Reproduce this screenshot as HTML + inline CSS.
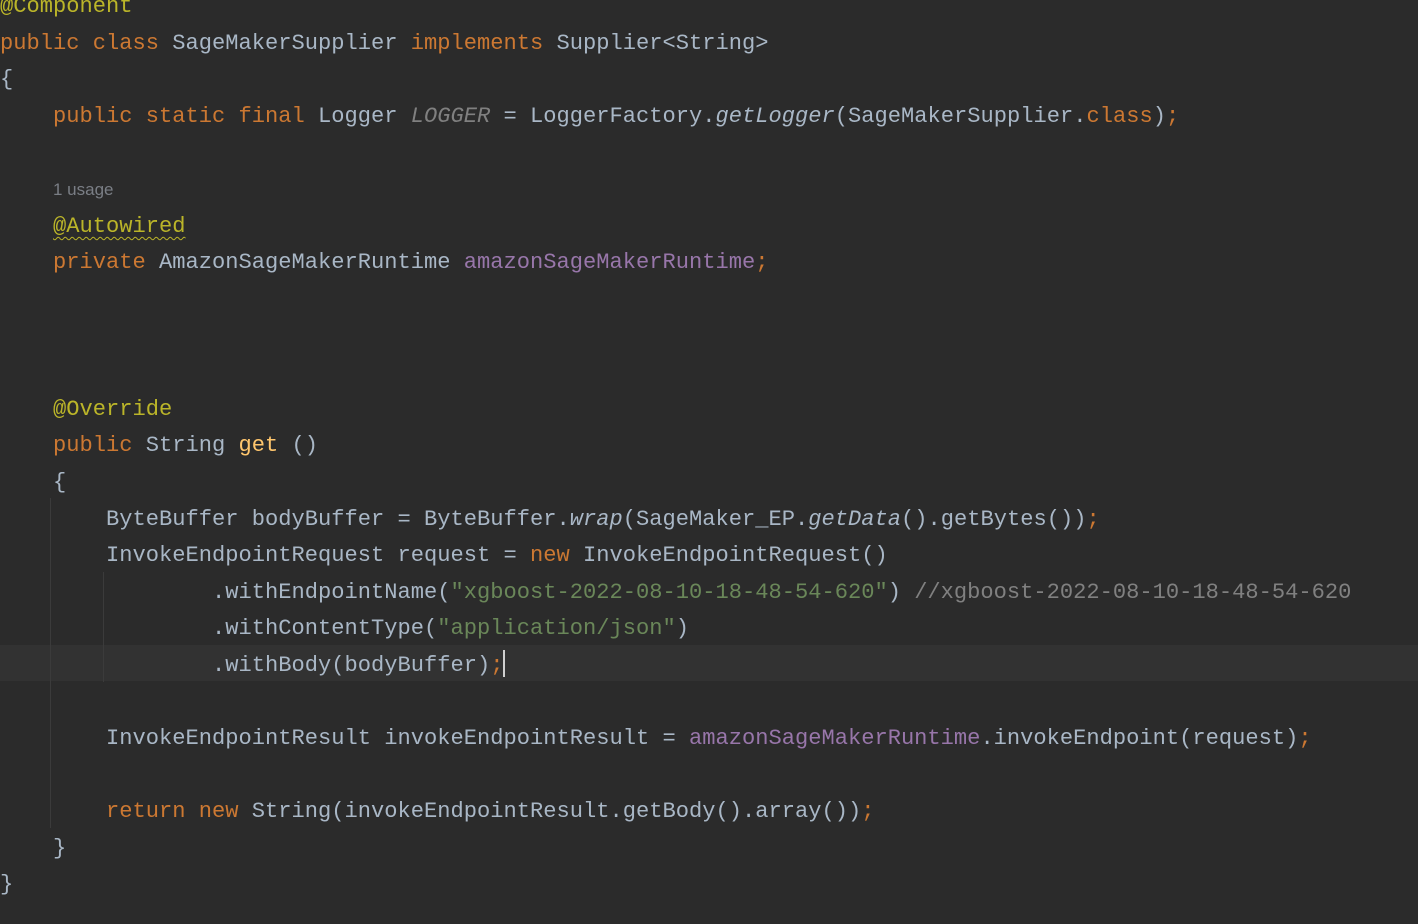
<!DOCTYPE html>
<html><head><meta charset="utf-8"><style>
html,body{margin:0;padding:0;background:#2b2b2b;width:1418px;height:924px;overflow:hidden}
#c{position:absolute;left:0;top:-10.8px;font-family:"Liberation Mono",monospace;font-size:22.08px;line-height:36.6px;color:#a9b7c6}
.l{height:36.6px;white-space:pre}
.k{color:#cc7832}.a{color:#bbb529}.s{color:#6a8759}.f{color:#9876aa}.c{color:#808080}.i{font-style:italic}.g{color:#808080;font-style:italic}
.u{font-family:"Liberation Sans",sans-serif;font-size:17px;color:#7a7e85}
.cur{position:absolute;left:0;top:645px;width:1418px;height:36px;background:#323232}
.guide{position:absolute;width:1px;background:#3b3b3b}
.caret{position:absolute;left:503px;top:650px;width:2px;height:27px;background:#d0d0d0}
.wavy{text-decoration:underline wavy #bbb529;text-decoration-thickness:1px;text-underline-offset:4px}
</style></head><body>
<div class="cur"></div>
<div class="guide" style="left:50px;top:498px;height:330px"></div>
<div class="guide" style="left:103px;top:572px;height:110px"></div>
<div id="c"><div class="l"><span class="a">@Component</span></div><div class="l"><span class="k">public class </span>SageMakerSupplier <span class="k">implements </span>Supplier&lt;String&gt;</div><div class="l">{</div><div class="l">    <span class="k">public static final </span>Logger <span class="g">LOGGER</span> = LoggerFactory.<span class="i">getLogger</span>(SageMakerSupplier.<span class="k">class</span>)<span class="k">;</span></div><div class="l"> </div><div class="l">    <span class="u">1 usage</span></div><div class="l">    <span class="a wavy">@Autowired</span></div><div class="l">    <span class="k">private </span>AmazonSageMakerRuntime <span class="f">amazonSageMakerRuntime</span><span class="k">;</span></div><div class="l"> </div><div class="l"> </div><div class="l"> </div><div class="l">    <span class="a">@Override</span></div><div class="l">    <span class="k">public </span>String <span style="color:#ffc66d">get</span> ()</div><div class="l">    {</div><div class="l">        ByteBuffer bodyBuffer = ByteBuffer.<span class="i">wrap</span>(SageMaker_EP.<span class="i">getData</span>().getBytes())<span class="k">;</span></div><div class="l">        InvokeEndpointRequest request = <span class="k">new </span>InvokeEndpointRequest()</div><div class="l">                .withEndpointName(<span class="s">"xgboost-2022-08-10-18-48-54-620"</span>) <span class="c">//xgboost-2022-08-10-18-48-54-620</span></div><div class="l">                .withContentType(<span class="s">"application/json"</span>)</div><div class="l">                .withBody(bodyBuffer)<span class="k">;</span></div><div class="l"> </div><div class="l">        InvokeEndpointResult invokeEndpointResult = <span class="f">amazonSageMakerRuntime</span>.invokeEndpoint(request)<span class="k">;</span></div><div class="l"> </div><div class="l">        <span class="k">return new </span>String(invokeEndpointResult.getBody().array())<span class="k">;</span></div><div class="l">    }</div><div class="l">}</div></div>
<div class="caret"></div>
</body></html>
